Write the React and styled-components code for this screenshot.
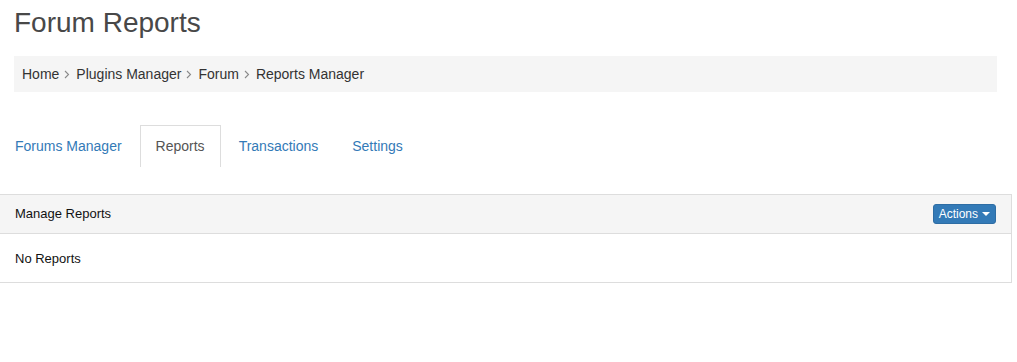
import React from 'react';
import styled, { createGlobalStyle } from 'styled-components';

const colors = {
  text: '#333',
  title: '#484848',
  link: '#337ab7',
  border: '#ddd',
  well: '#f5f5f5',
  primary: '#337ab7',
  primaryBorder: '#2e6da4',
};

const GlobalStyle = createGlobalStyle`
  html, body {
    margin: 0;
    padding: 0;
    background: #fff;
    font-family: "Liberation Sans", Arial, Helvetica, sans-serif;
    color: ${colors.text};
  }
  * { box-sizing: border-box; }
`;

const crumbs = ['Home', 'Plugins Manager', 'Forum', 'Reports Manager'];
const tabs = ['Forums Manager', 'Reports', 'Transactions', 'Settings'];

const Chevron = () => (
  <svg width="6" height="9" viewBox="0 0 6 9">
    <path d="M1 1 L4.5 4.5 L1 8" fill="none" stroke="#8a8a8a" strokeWidth="1.1" />
  </svg>
);

const App = () => {
  return (
    <Page>
      <GlobalStyle />
      <Header>
        <Title>Forum Reports</Title>
        <Breadcrumb>
          {crumbs.map((c, i) => (
            <React.Fragment key={c}>
              {i > 0 && (
                <Separator>
                  <Chevron />
                </Separator>
              )}
              <Crumb>{c}</Crumb>
            </React.Fragment>
          ))}
        </Breadcrumb>
      </Header>

      <Tabs>
        {tabs.map((t) => (
          <Tab key={t} $active={t === 'Reports'}>
            {t}
          </Tab>
        ))}
      </Tabs>

      <Panel>
        <PanelHeading>
          <PanelTitle>Manage Reports</PanelTitle>
          <ActionsButton>
            Actions
            <Caret />
          </ActionsButton>
        </PanelHeading>
        <PanelBody>No Reports</PanelBody>
      </Panel>
    </Page>
  );
};

const Page = styled.div`
  width: 1017px;
  display: flex;
  flex-direction: column;
`;

const Header = styled.div`
  padding: 0 20px 0 14px;
  display: flex;
  flex-direction: column;
`;

const Title = styled.h1`
  margin: 0;
  padding-top: 5px;
  font-size: 28px;
  line-height: 36px;
  font-weight: 400;
  color: ${colors.title};
`;

const Breadcrumb = styled.div`
  margin-top: 15px;
  height: 36px;
  padding: 8px;
  background: ${colors.well};
  display: flex;
  align-items: center;
  font-size: 14px;
  line-height: 20px;
  color: ${colors.text};
`;

const Crumb = styled.span`
  color: #333;
`;

const Separator = styled.span`
  display: flex;
  align-items: center;
  padding: 1px 6px 0 5px;
`;

const Tabs = styled.div`
  margin-top: 33px;
  margin-left: -1px;
  display: flex;
  align-items: flex-end;
`;

const Tab = styled.div`
  margin-right: 2px;
  padding: 10px 15px 11px;
  font-size: 14px;
  line-height: 20px;
  border: 1px solid ${(p) => (p.$active ? colors.border : 'transparent')};
  border-bottom: none;
  color: ${(p) => (p.$active ? '#555' : colors.link)};
  cursor: pointer;
`;

const Panel = styled.div`
  margin: 27px 5px 0 -1px;
  border: 1px solid ${colors.border};
  display: flex;
  flex-direction: column;
`;

const PanelHeading = styled.div`
  height: 39px;
  padding: 0 15px 1px 15px;
  background: ${colors.well};
  border-bottom: 1px solid ${colors.border};
  display: flex;
  align-items: center;
  justify-content: space-between;
`;

const PanelTitle = styled.span`
  font-size: 13px;
  color: #111;
`;

const ActionsButton = styled.button`
  height: 20px;
  padding: 0 5px;
  border: 1px solid ${colors.primaryBorder};
  border-radius: 3px;
  background: ${colors.primary};
  color: #fff;
  font-family: inherit;
  font-size: 12px;
  line-height: 18px;
  display: flex;
  align-items: center;
  gap: 4px;
`;

const Caret = styled.span`
  width: 0;
  height: 0;
  margin-top: 1px;
  border-top: 4px solid #fff;
  border-left: 4px solid transparent;
  border-right: 4px solid transparent;
`;

const PanelBody = styled.div`
  height: 48px;
  padding: 0 15px;
  display: flex;
  align-items: center;
  font-size: 13px;
  color: #111;
`;

export default App;
